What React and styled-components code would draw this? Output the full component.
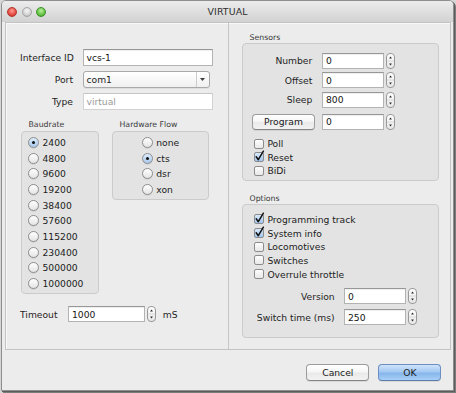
import React from 'react';
import styled, { createGlobalStyle } from 'styled-components';

const Global = createGlobalStyle`
  html, body { margin: 0; padding: 0; }
  body {
    background: #d6d6d6;
    width: 456px;
    height: 393px;
    overflow: hidden;
    font-family: "DejaVu Sans", "Liberation Sans", sans-serif;
    color: #1c1c1c;
  }
`;

const Window = styled.div`
  box-sizing: border-box;
  margin-left: 1px;
  width: 453px;
  height: 391px;
  border: 1px solid #8e8e8e;
  border-radius: 5px 5px 0 0;
  background: #ececec;
  box-shadow: 1px 1px 0 #5c5c5c, 2px 2px 0 #7c7c7c;
  display: flex;
  flex-direction: column;
  overflow: hidden;
`;

const TitleBar = styled.div`
  height: 21px;
  flex: none;
  background: linear-gradient(#ececec, #d2d2d2);
  display: grid;
  grid-template-columns: 1fr auto 1fr;
  align-items: center;
`;

const Lights = styled.div`
  display: flex;
  gap: 4.6px;
  padding-left: 5px;
`;

const lightColors = {
  red: ['#ff9c92', '#e2453d', '#b0352e'],
  gray: ['#f6f6f6', '#d0d0d0', '#a6a6a6'],
  green: ['#b8f09c', '#5fbf3f', '#3d8f29'],
};

const Light = styled.span`
  box-sizing: border-box;
  width: 10px;
  height: 10px;
  border-radius: 50%;
  border: 1px solid ${(p) => lightColors[p.$c][2]};
  background: radial-gradient(circle at 50% 35%, ${(p) => lightColors[p.$c][0]} 0%, ${(p) => lightColors[p.$c][1]} 65%, ${(p) => lightColors[p.$c][2]} 100%);
`;

const Title = styled.div`
  font-size: 9.4px;
  color: #2e2e2e;
  letter-spacing: 0.1px;
`;

const Content = styled.div`
  padding: 0 2px 0 3px;
`;

const Panel = styled.div`
  box-sizing: border-box;
  height: 328px;
  border: 1px solid #c3c3c3;
  box-shadow: inset 1px 1px 0 #f9f9f9;
  display: grid;
  grid-template-columns: 222px 1fr;
`;

const LeftCol = styled.div`
  padding: 26px 0 0 14px;
  display: flex;
  flex-direction: column;
`;

const RightCol = styled.div`
  border-left: 1px solid #c6c6c6;
  padding: 9.5px 0 0 13px;
  display: flex;
  flex-direction: column;
`;

const FormGrid = styled.div`
  display: grid;
  grid-template-columns: 53px 130px;
  column-gap: 9.5px;
  row-gap: 5px;
  grid-auto-rows: 17px;
  align-items: center;
`;

const Label = styled.div`
  font-size: 9.2px;
  text-align: right;
  white-space: nowrap;
  color: #1e1e1e;
  ${(p) => (p.$w ? `width: ${p.$w}px; box-sizing: border-box; padding-right: ${p.$pr || 0}px;` : '')}
`;

const Field = styled.div`
  box-sizing: border-box;
  width: ${(p) => p.$w}px;
  height: ${(p) => p.$h || 17}px;
  background: #fff;
  border: 1px solid ${(p) => (p.$disabled ? '#d2d2d2' : '#b3b3b3')};
  border-top-color: ${(p) => (p.$disabled ? '#c6c6c6' : '#979797')};
  box-shadow: ${(p) => (p.$disabled ? 'none' : 'inset 0 1px 1px rgba(0,0,0,0.07)')};
  padding: 0 3px;
  display: flex;
  align-items: center;
  font-size: 9.2px;
  color: ${(p) => (p.$disabled ? '#9a9a9a' : '#151515')};
  white-space: nowrap;
`;

const Combo = styled.div`
  box-sizing: border-box;
  width: 127px;
  height: 17px;
  border: 1px solid #a9a9a9;
  border-radius: 3px;
  background: linear-gradient(#ffffff, #f0f0f0);
  box-shadow: 0 1px 0 rgba(0,0,0,0.06);
  display: grid;
  grid-template-columns: 1fr 13px;
  font-size: 9.2px;
`;

const ComboText = styled.div`
  padding-left: 3px;
  display: flex;
  align-items: center;
`;

const ComboArrow = styled.div`
  border-left: 1px solid #cdcdcd;
  display: flex;
  align-items: center;
  justify-content: center;
`;

const GroupsRow = styled.div`
  display: flex;
  gap: 13px;
  margin-top: 10px;
  padding-left: 1px;
  align-items: flex-start;
`;

const Group = styled.div`
  display: flex;
  flex-direction: column;
  width: ${(p) => p.$w}px;
`;

const GroupTitle = styled.div`
  font-size: 7.8px;
  line-height: 10px;
  height: 10px;
  padding-left: 7.5px;
  color: #3a3a3a;
  margin-bottom: ${(p) => p.$mb ?? 0.5}px;
`;

const GroupBox = styled.div`
  box-sizing: border-box;
  border: 1px solid #cbcbcb;
  border-radius: 4px;
  background: #e3e3e3;
  padding: ${(p) => p.$pad};
  display: flex;
  flex-direction: column;
  align-items: ${(p) => (p.$center ? 'center' : 'stretch')};
`;

const RadioList = styled.div`
  display: flex;
  flex-direction: column;
`;

const RadioItem = styled.div`
  display: flex;
  align-items: center;
  gap: 3.5px;
  height: 15.7px;
  font-size: 9.2px;
  white-space: nowrap;
`;

const RadioCircle = styled.span`
  box-sizing: border-box;
  width: 11px;
  height: 11px;
  border-radius: 50%;
  border: 1px solid #8d8d8d;
  background: ${(p) =>
    p.$on
      ? 'linear-gradient(#dcebfb, #a7c9ee)'
      : 'linear-gradient(#ffffff, #e4e4e4)'};
  box-shadow: 0 0.5px 0.5px rgba(0,0,0,0.15);
  display: flex;
  align-items: center;
  justify-content: center;
  &::after {
    content: '';
    width: 3px;
    height: 3px;
    border-radius: 50%;
    background: #111;
    display: ${(p) => (p.$on ? 'block' : 'none')};
  }
`;

const TimeoutRow = styled.div`
  display: flex;
  align-items: center;
  margin-top: 12px;
  font-size: 9.2px;
`;

const TimeoutLabel = styled.span`
  width: 48px;
  color: #2a1c1c;
`;

const SpinWrap = styled.div`
  display: flex;
  align-items: center;
  gap: 1.8px;
`;

const Unit = styled.span`
  margin-left: 7px;
`;

const SectionBox = styled.div`
  box-sizing: border-box;
  width: 197px;
  border: 1px solid #cbcbcb;
  border-radius: 4px;
  background: #e3e3e3;
  padding: ${(p) => p.$pad};
  display: flex;
  flex-direction: column;
`;

const Row = styled.div`
  display: flex;
  align-items: center;
  height: 16px;
  gap: ${(p) => p.$gap}px;
  margin-top: ${(p) => p.$mt || 0}px;
`;

const PushButton = styled.div`
  box-sizing: border-box;
  width: ${(p) => p.$w}px;
  height: ${(p) => p.$h}px;
  border-radius: 4px;
  border: 1px solid ${(p) => (p.$primary ? '#6b8fc3' : '#9c9c9c')};
  border-bottom-color: ${(p) => (p.$primary ? '#5a7cae' : '#858585')};
  background: ${(p) =>
    p.$primary
      ? 'linear-gradient(#cfe3fa 0%, #a4c9f2 45%, #86b6ec 55%, #a8cff6 100%)'
      : 'linear-gradient(#ffffff 0%, #f6f6f6 45%, #e9e9e9 55%, #f3f3f3 100%)'};
  box-shadow: 0 1px 0 rgba(0,0,0,0.08);
  display: flex;
  align-items: center;
  justify-content: center;
  font-size: 9.2px;
  color: #1a1a1a;
  white-space: nowrap;
`;

const CheckList = styled.div`
  display: flex;
  flex-direction: column;
  margin-top: ${(p) => p.$mt}px;
  margin-left: 2px;
`;

const CheckItem = styled.div`
  display: flex;
  align-items: center;
  gap: 3.4px;
  height: ${(p) => p.$h}px;
  font-size: 9.2px;
  white-space: nowrap;
`;

const ButtonRow = styled.div`
  display: flex;
  justify-content: flex-end;
  gap: 9px;
  padding: 14.3px 11.7px 0 0;
`;

function Spinner() {
  return (
    <svg width="9" height="16" viewBox="0 0 9 16">
      <defs>
        <linearGradient id="spg" x1="0" y1="0" x2="0" y2="1">
          <stop offset="0" stopColor="#ffffff" />
          <stop offset="1" stopColor="#e6e6e6" />
        </linearGradient>
      </defs>
      <rect x="0.5" y="0.5" width="8" height="15" rx="3.5" fill="url(#spg)" stroke="#999" />
      <line x1="1" y1="8" x2="8" y2="8" stroke="#d2d2d2" strokeWidth="0.8" />
      <path d="M3.1 5.6 L4.5 3.6 L5.9 5.6 Z" fill="#2a2a2a" />
      <path d="M3.1 10.4 L4.5 12.4 L5.9 10.4 Z" fill="#2a2a2a" />
    </svg>
  );
}

function SpinField({ w, value }) {
  return (
    <SpinWrap>
      <Field $w={w} $h={16}>{value}</Field>
      <Spinner />
    </SpinWrap>
  );
}

function Check({ on }) {
  return (
    <svg width="10" height="10" viewBox="0 0 10 10" style={{ overflow: 'visible', flex: 'none' }}>
      <defs>
        <linearGradient id="cbOff" x1="0" y1="0" x2="0" y2="1">
          <stop offset="0" stopColor="#ffffff" />
          <stop offset="1" stopColor="#e6e6e6" />
        </linearGradient>
        <linearGradient id="cbOn" x1="0" y1="0" x2="0" y2="1">
          <stop offset="0" stopColor="#dcebfb" />
          <stop offset="1" stopColor="#9ec4ee" />
        </linearGradient>
      </defs>
      <rect x="0.5" y="0.5" width="9" height="9" rx="1.6" fill={on ? 'url(#cbOn)' : 'url(#cbOff)'} stroke="#8a8a8a" />
      {on && (
        <path d="M2.2 4.8 L4.3 7.7 L9.4 -0.8" stroke="#111" strokeWidth="1.5" fill="none" strokeLinecap="round" strokeLinejoin="round" />
      )}
    </svg>
  );
}

const bauds = ['2400', '4800', '9600', '19200', '38400', '57600', '115200', '230400', '500000', '1000000'];
const flows = ['none', 'cts', 'dsr', 'xon'];

export default function App() {
  return (
    <>
      <Global />
      <Window>
        <TitleBar>
          <Lights>
            <Light $c="red" />
            <Light $c="gray" />
            <Light $c="green" />
          </Lights>
          <Title>VIRTUAL</Title>
          <div />
        </TitleBar>
        <Content>
          <Panel>
            <LeftCol>
              <FormGrid>
                <Label>Interface ID</Label>
                <Field $w={130}>vcs-1</Field>
                <Label>Port</Label>
                <Combo>
                  <ComboText>com1</ComboText>
                  <ComboArrow>
                    <svg width="5" height="3" viewBox="0 0 5 3">
                      <path d="M0 0 L5 0 L2.5 3 Z" fill="#3c3c3c" />
                    </svg>
                  </ComboArrow>
                </Combo>
                <Label>Type</Label>
                <Field $w={130} $disabled>virtual</Field>
              </FormGrid>

              <GroupsRow>
                <Group $w={78}>
                  <GroupTitle>Baudrate</GroupTitle>
                  <GroupBox $pad="3px 0 2px 6px">
                    <RadioList>
                      {bauds.map((b, i) => (
                        <RadioItem key={b}>
                          <RadioCircle $on={i === 0} />
                          {b}
                        </RadioItem>
                      ))}
                    </RadioList>
                  </GroupBox>
                </Group>
                <Group $w={97}>
                  <GroupTitle>Hardware Flow</GroupTitle>
                  <GroupBox $pad="3px 0 2px 0" $center>
                    <RadioList>
                      {flows.map((f, i) => (
                        <RadioItem key={f}>
                          <RadioCircle $on={i === 1} />
                          {f}
                        </RadioItem>
                      ))}
                    </RadioList>
                  </GroupBox>
                </Group>
              </GroupsRow>

              <TimeoutRow>
                <TimeoutLabel>Timeout</TimeoutLabel>
                <SpinField w={77} value="1000" />
                <Unit>mS</Unit>
              </TimeoutRow>
            </LeftCol>

            <RightCol>
              <GroupTitle>Sensors</GroupTitle>
              <SectionBox $pad="8.5px 0 3px 9px">
                <Row $gap={7}>
                  <Label $w={63} $pr={2.7}>Number</Label>
                  <SpinField w={62} value="0" />
                </Row>
                <Row $gap={7} $mt={3.7}>
                  <Label $w={63} $pr={2.7}>Offset</Label>
                  <SpinField w={62} value="0" />
                </Row>
                <Row $gap={7} $mt={3.7}>
                  <Label $w={63} $pr={2.7}>Sleep</Label>
                  <SpinField w={62} value="800" />
                </Row>
                <Row $gap={7} $mt={6}>
                  <PushButton $w={63} $h={16}>Program</PushButton>
                  <SpinField w={62} value="0" />
                </Row>
                <CheckList $mt={7}>
                  <CheckItem $h={13.5}><Check />Poll</CheckItem>
                  <CheckItem $h={13.5}><Check on />Reset</CheckItem>
                  <CheckItem $h={13.5}><Check />BiDi</CheckItem>
                </CheckList>
              </SectionBox>

              <div style={{ height: 12.3 }} />
              <GroupTitle>Options</GroupTitle>
              <SectionBox $pad="7.4px 0 11.6px 9px">
                <CheckList $mt={0}>
                  <CheckItem $h={13.7}><Check on />Programming track</CheckItem>
                  <CheckItem $h={13.7}><Check on />System info</CheckItem>
                  <CheckItem $h={13.7}><Check />Locomotives</CheckItem>
                  <CheckItem $h={13.7}><Check />Switches</CheckItem>
                  <CheckItem $h={13.7}><Check />Overrule throttle</CheckItem>
                </CheckList>
                <Row $gap={9} $mt={7.3}>
                  <Label $w={83} $pr={0.3}>Version</Label>
                  <SpinField w={62} value="0" />
                </Row>
                <Row $gap={9} $mt={5}>
                  <Label $w={83} $pr={0.3}>Switch time (ms)</Label>
                  <SpinField w={62} value="250" />
                </Row>
              </SectionBox>
            </RightCol>
          </Panel>
        </Content>
        <ButtonRow>
          <PushButton $w={63} $h={16.5}>Cancel</PushButton>
          <PushButton $w={63} $h={16.5} $primary>OK</PushButton>
        </ButtonRow>
      </Window>
    </>
  );
}
